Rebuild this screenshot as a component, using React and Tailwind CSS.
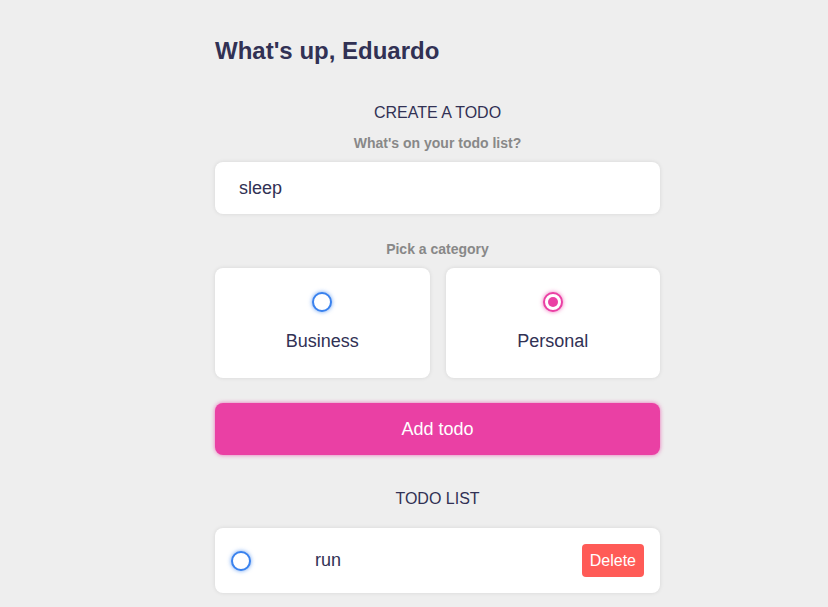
const Bubble = ({ kind, checked }) => {
  const ring =
    kind === 'personal'
      ? 'border-[#ea40a4] shadow-[0_0_4px_rgba(234,64,164,0.75)]'
      : 'border-[#3a82ee] shadow-[0_0_4px_rgba(58,130,238,0.75)]'
  const dot = kind === 'personal' ? 'bg-[#ea40a4]' : 'bg-[#3a82ee]'

  return (
    <span className={`w-5 h-5 rounded-full border-2 bg-white flex items-center justify-center ${ring}`}>
      {checked && <span className={`w-[10px] h-[10px] rounded-full ${dot}`} />}
    </span>
  )
}

const CategoryOption = ({ kind, label, checked }) => (
  <label className="h-[110px] bg-white rounded-lg shadow-[0_0_4px_rgba(0,0,0,0.1)] flex flex-col items-center pt-6 cursor-pointer">
    <Bubble kind={kind} checked={checked} />
    <div className="mt-[19px] text-[18px] leading-[20px] text-[#313154]">{label}</div>
  </label>
)

export default function App() {
  return (
    <main
      className="min-h-[607px] bg-[#eeeeee] text-[#313154]"
      style={{ fontFamily: '"Liberation Sans", Arial, sans-serif' }}
    >
      <div className="ml-[215px] w-[445px] pt-[37px] pb-8">
        <h2 className="text-[24px] leading-[28px] font-bold">What's up, Eduardo</h2>

        <section className="mt-[39px] flex flex-col">
          <h3 className="text-center text-[16px] leading-[18px] uppercase">Create a todo</h3>
          <h4 className="mt-[13px] text-center text-[14px] leading-4 font-bold text-[#888888]">
            What's on your todo list?
          </h4>
          <div className="mt-[11px] h-[52px] bg-white rounded-lg shadow-[0_0_4px_rgba(0,0,0,0.1)] flex items-center px-6 text-[18px] text-[#313154]">
            sleep
          </div>

          <h4 className="mt-[27px] text-center text-[14px] leading-4 font-bold text-[#888888]">
            Pick a category
          </h4>
          <div className="mt-[11px] grid grid-cols-2 gap-4">
            <CategoryOption kind="business" label="Business" checked={false} />
            <CategoryOption kind="personal" label="Personal" checked />
          </div>

          <button className="mt-[25px] h-[52px] rounded-lg bg-[#ea40a4] text-white text-[18px] shadow-[0_0_4px_rgba(234,64,164,0.75)]">
            Add todo
          </button>
        </section>

        <section className="mt-[35px]">
          <h3 className="text-center text-[16px] leading-[18px] uppercase">Todo list</h3>
          <div className="mt-[20px] h-[65px] bg-white rounded-lg shadow-[0_0_4px_rgba(0,0,0,0.1)] flex items-center px-4">
            <Bubble kind="business" checked={false} />
            <div className="ml-[64px] flex-1 text-[18px] text-[#313154]">run</div>
            <button className="h-[33px] px-2 rounded bg-[#ff5b57] text-white text-[16px]">Delete</button>
          </div>
        </section>
      </div>
    </main>
  )
}
